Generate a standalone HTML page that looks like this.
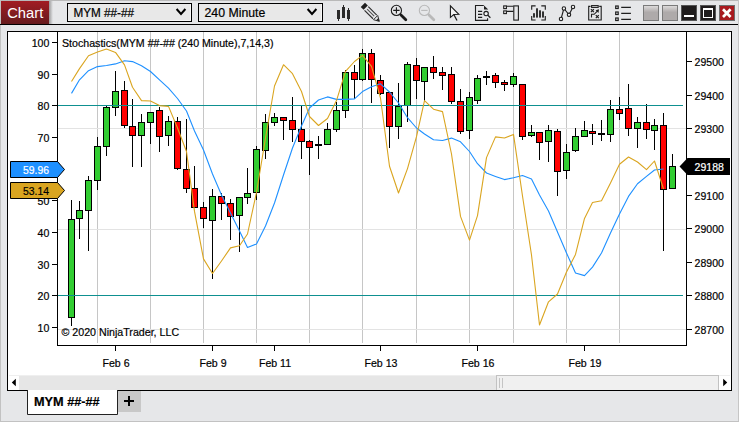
<!DOCTYPE html>
<html><head><meta charset="utf-8"><style>
html,body{margin:0;padding:0;width:739px;height:422px;overflow:hidden;background:#e6e7e9;font-family:"Liberation Sans", sans-serif;}
</style></head><body>
<svg width="739" height="422" viewBox="0 0 739 422" style="position:absolute;left:0;top:0;font-family:'Liberation Sans', sans-serif">
<rect x="0" y="0" width="739" height="422" fill="#e6e7e9"/>
<rect x="0" y="0" width="739" height="1" fill="#b9b9b9"/>
<rect x="0" y="0" width="1" height="422" fill="#c2c2c2"/>
<rect x="738" y="0" width="1" height="422" fill="#c6c6c6"/>
<rect x="0" y="421" width="739" height="1" fill="#c2c2c2"/>
<rect x="1" y="1" width="737" height="23" fill="#e6e7e9"/>
<rect x="0" y="24" width="738" height="1" fill="#000"/>
<defs><linearGradient id="tg" x1="0" y1="0" x2="0" y2="1"><stop offset="0" stop-color="#a21d23"/><stop offset="1" stop-color="#661a1d"/></linearGradient><linearGradient id="sh" x1="0" y1="0" x2="1" y2="0"><stop offset="0" stop-color="#9a9a9a"/><stop offset="1" stop-color="#e6e7e9"/></linearGradient><linearGradient id="gb" x1="0" y1="0" x2="0" y2="1"><stop offset="0" stop-color="#dcdada"/><stop offset="0.45" stop-color="#aeaaaa"/><stop offset="1" stop-color="#aeaaaa"/></linearGradient></defs>
<rect x="49" y="1" width="4" height="23" fill="url(#sh)"/>
<rect x="1" y="1" width="48" height="23" fill="url(#tg)"/>
<text transform="translate(7.2,17.8) scale(0.99,1)" font-size="14.9" text-anchor="start" fill="#fff" stroke="#fff" stroke-width="0" font-weight="normal">Chart</text>
<rect x="67.5" y="3.5" width="124" height="18" fill="#e8e8e8" stroke="#000" stroke-width="1"/>
<path d="M68,20.5 H190.5 V4" fill="none" stroke="#f8f8f8" stroke-width="1"/>
<text transform="translate(73.5,17) scale(0.937,1)" font-size="12.5" text-anchor="start" fill="#000" stroke="#000" stroke-width="0.2" font-weight="normal">MYM ##-##</text>
<polyline points="176.6,9.0 181,13.9 185.4,9.0" fill="none" stroke="#000" stroke-width="2"/>
<rect x="198.5" y="3.5" width="124" height="18" fill="#e8e8e8" stroke="#000" stroke-width="1"/>
<path d="M199,20.5 H321.5 V4" fill="none" stroke="#f8f8f8" stroke-width="1"/>
<text transform="translate(204.5,17) scale(0.985,1)" font-size="12.5" text-anchor="start" fill="#000" stroke="#000" stroke-width="0.2" font-weight="normal">240 Minute</text>
<polyline points="307.6,9.0 312,13.9 316.4,9.0" fill="none" stroke="#000" stroke-width="2"/>
<g fill="#2a2a2a" shape-rendering="crispEdges">
<rect x="337" y="10" width="3" height="9"/><rect x="338" y="19" width="1" height="2"/>
<rect x="342" y="7" width="3" height="11"/><rect x="343" y="5" width="1" height="2"/>
<rect x="347" y="10" width="3" height="9"/><rect x="348" y="8" width="1" height="2"/><rect x="348" y="19" width="1" height="2"/>
</g>
<g transform="translate(371,13) rotate(45)"><rect x="-11.5" y="-3" width="4" height="6" fill="#1e1e1e"/><rect x="-6.5" y="-3.2" width="12" height="1.1" fill="#2a2a2a"/><rect x="-6.5" y="2.1" width="12" height="1.1" fill="#2a2a2a"/><rect x="-5.5" y="-0.55" width="10" height="1.1" fill="#555"/><path d="M6.5,-3 L11.8,0 L6.5,3 Z" fill="#e6e7e9" stroke="#2a2a2a" stroke-width="0.9"/><path d="M8.8,-1.6 L11.8,0 L8.8,1.6 Z" fill="#1e1e1e"/></g>
<g stroke="#1a1a1a" fill="none"><circle cx="396.4" cy="10.4" r="5.1" stroke-width="1.1"/><path d="M393.2,10.4 H399.6 M396.4,7.2 V13.6" stroke-width="1.1"/><path d="M401,15 L405.8,19.8" stroke-width="2.8" stroke-linecap="round"/></g>
<g stroke="#b9b9b9" fill="none"><circle cx="424.4" cy="10.4" r="5.1" stroke-width="1.1"/><path d="M421.2,10.4 H427.6" stroke-width="1.1"/><path d="M429,15 L433.8,19.8" stroke-width="2.8" stroke-linecap="round"/></g>
<g stroke="#1a1a1a" fill="none" stroke-width="1.1"><path d="M450.4,5.9 V17.4 L453.8,14.5 L458.8,14.3 Z" fill="#f2f2f2"/><path d="M453.8,14.5 L457,20.5" stroke-width="1.3"/></g>
<g stroke="#1e1e1e" fill="none" stroke-width="1.1"><path d="M487.6,18.2 V20.4 H475.5 V5.5 H483.8"/><path d="M478,11.4 H482.2 M478,14.4 H482.2 M478,17.4 H482.2" stroke-width="1.2"/><circle cx="486.1" cy="13.6" r="2.2" fill="#f4f4f4"/><path d="M487.8,15.3 L490.4,17.8" stroke-width="1.2"/></g>
<path d="M484,5.6 L488.2,9.6 L484,9.6 Z" fill="#1e1e1e"/>
<g stroke="#1e1e1e" fill="none" stroke-width="1.1"><rect x="503.7" y="5.9" width="2.7" height="2.7" fill="#f4f4f4"/><rect x="503.7" y="10.9" width="2.7" height="2.7" fill="#f4f4f4"/><path d="M506.6,6.3 H513.5 M506.6,11.4 H513.5"/><rect x="513.8" y="5.9" width="4.6" height="14.2"/></g>
<g stroke="#1e1e1e" fill="none" stroke-width="1.1"><path d="M531.7,9.8 V5.9 H535.6 M541.3,5.9 H545.3 V9.8 M545.3,16 V20 H541.3 M535.6,20 H531.7 V16"/></g>
<g fill="#1e1e1e"><rect x="533.1" y="13.2" width="1.8" height="4.4"/><rect x="536.1" y="8.3" width="1.8" height="9.3"/><rect x="539.1" y="10.3" width="1.8" height="7.3"/><rect x="542.1" y="11.4" width="1.8" height="6.2"/></g>
<g stroke="#1e1e1e" stroke-width="1.1"><polyline points="561,19 563.9,8.5 569,14.8 573,7" fill="none"/><circle cx="561" cy="19" r="1.7" fill="#f2f2f2"/><circle cx="563.9" cy="8.5" r="1.7" fill="#f2f2f2"/><circle cx="569" cy="14.8" r="1.7" fill="#f2f2f2"/><circle cx="573" cy="7" r="1.7" fill="#f2f2f2"/></g>
<g stroke="#1e1e1e" fill="none" stroke-width="1.1"><path d="M590.5,6.4 H588.7 V20 H601.2 V6.4 H599.2"/><rect x="591.6" y="5.6" width="6.6" height="1.8" fill="#f2f2f2"/><path d="M591.5,17.6 V14.3 H594.2 L597.6,10.9"/><path d="M590.9,9.1 L593.9,12.1 M593.9,9.1 L590.9,12.1 M595.8,15.1 L598.8,18.1 M598.8,15.1 L595.8,18.1" stroke-width="1.2"/></g>
<path d="M595.6,10.3 L599,9.2 L598.5,12.9 Z" fill="#1e1e1e"/>
<g stroke="#1e1e1e" fill="none" stroke-width="1.2"><rect x="615.7" y="6" width="2.5" height="2.5"/><rect x="615.7" y="12" width="2.5" height="2.5"/><rect x="615.7" y="18" width="2.5" height="2.5"/><path d="M621.2,7.4 H630.9 M621.2,13.4 H630.9 M621.2,19.4 H630.9"/></g>
<rect x="643" y="5" width="16" height="16" fill="#7a7a7a"/><rect x="644" y="6" width="14" height="14" fill="url(#gb)"/>
<rect x="662" y="5" width="16" height="16" fill="#7a7a7a"/><rect x="663" y="6" width="14" height="14" fill="url(#gb)"/>
<rect x="681" y="5" width="16" height="16" fill="#555"/><rect x="682" y="6" width="14" height="14" fill="#1f1c1c"/>
<rect x="684" y="15" width="10" height="2" fill="#fff"/>
<rect x="700" y="5" width="16" height="16" fill="#555"/><rect x="701" y="6" width="14" height="14" fill="#1f1c1c"/>
<rect x="703.5" y="8.5" width="9" height="9" fill="none" stroke="#fff" stroke-width="1"/><rect x="703" y="8" width="10" height="2" fill="#fff"/>
<rect x="719" y="5" width="16" height="16" fill="#6e6e6e"/><rect x="720" y="6" width="14" height="14" fill="#a8191e"/>
<path d="M723,9.3 L730.6,17 M730.6,9.3 L723,17" stroke="#fff" stroke-width="2.7"/>
<rect x="7.5" y="31.5" width="724" height="359" fill="#fff" stroke="#000" stroke-width="1"/>
<rect x="97" y="32" width="1" height="311" fill="#c6c6c6"/>
<rect x="150" y="32" width="1" height="311" fill="#c6c6c6"/>
<rect x="203" y="32" width="1" height="311" fill="#c6c6c6"/>
<rect x="256" y="32" width="1" height="311" fill="#c6c6c6"/>
<rect x="309" y="32" width="1" height="311" fill="#c6c6c6"/>
<rect x="362" y="32" width="1" height="311" fill="#c6c6c6"/>
<rect x="416" y="32" width="1" height="311" fill="#c6c6c6"/>
<rect x="469" y="32" width="1" height="311" fill="#c6c6c6"/>
<rect x="513" y="32" width="1" height="311" fill="#c6c6c6"/>
<rect x="566" y="32" width="1" height="311" fill="#c6c6c6"/>
<rect x="619" y="32" width="1" height="311" fill="#c6c6c6"/>
<rect x="58" y="128" width="628" height="1" fill="#e3e3e3"/>
<rect x="58" y="229" width="628" height="1" fill="#e3e3e3"/>
<rect x="58" y="329" width="628" height="1" fill="#e3e3e3"/>
<text transform="translate(62,47) scale(0.951,1)" font-size="11.2" text-anchor="start" fill="#000" stroke="#000" stroke-width="0.2" font-weight="normal">Stochastics(MYM ##-## (240 Minute),7,14,3)</text>
<text transform="translate(61.5,336) scale(0.952,1)" font-size="11.2" text-anchor="start" fill="#000" stroke="#000" stroke-width="0.2" font-weight="normal">© 2020 NinjaTrader, LLC</text>
<g shape-rendering="crispEdges">
<rect x="71" y="200" width="1" height="126" fill="#000"/>
<rect x="68" y="219" width="7" height="99" fill="#000"/>
<rect x="69" y="220" width="5" height="97" fill="#32cd32"/>
<rect x="79" y="201" width="1" height="38" fill="#000"/>
<rect x="76" y="210" width="7" height="9" fill="#000"/>
<rect x="77" y="211" width="5" height="7" fill="#32cd32"/>
<rect x="88" y="176" width="1" height="75" fill="#000"/>
<rect x="85" y="180" width="7" height="31" fill="#000"/>
<rect x="86" y="181" width="5" height="29" fill="#32cd32"/>
<rect x="97" y="137" width="1" height="53" fill="#000"/>
<rect x="94" y="146" width="7" height="35" fill="#000"/>
<rect x="95" y="147" width="5" height="33" fill="#32cd32"/>
<rect x="106" y="106" width="1" height="50" fill="#000"/>
<rect x="103" y="107" width="7" height="40" fill="#000"/>
<rect x="104" y="108" width="5" height="38" fill="#32cd32"/>
<rect x="115" y="71" width="1" height="45" fill="#000"/>
<rect x="112" y="91" width="7" height="17" fill="#000"/>
<rect x="113" y="92" width="5" height="15" fill="#32cd32"/>
<rect x="124" y="81" width="1" height="47" fill="#000"/>
<rect x="121" y="90" width="7" height="36" fill="#000"/>
<rect x="122" y="91" width="5" height="34" fill="#ff0000"/>
<rect x="132" y="99" width="1" height="68" fill="#000"/>
<rect x="129" y="126" width="7" height="10" fill="#000"/>
<rect x="130" y="127" width="5" height="8" fill="#ff0000"/>
<rect x="141" y="114" width="1" height="53" fill="#000"/>
<rect x="138" y="122" width="7" height="14" fill="#000"/>
<rect x="139" y="123" width="5" height="12" fill="#32cd32"/>
<rect x="150" y="112" width="1" height="32" fill="#000"/>
<rect x="147" y="112" width="7" height="11" fill="#000"/>
<rect x="148" y="113" width="5" height="9" fill="#32cd32"/>
<rect x="159" y="107" width="1" height="45" fill="#000"/>
<rect x="156" y="110" width="7" height="27" fill="#000"/>
<rect x="157" y="111" width="5" height="25" fill="#ff0000"/>
<rect x="168" y="116" width="1" height="30" fill="#000"/>
<rect x="165" y="121" width="7" height="15" fill="#000"/>
<rect x="166" y="122" width="5" height="13" fill="#32cd32"/>
<rect x="177" y="117" width="1" height="53" fill="#000"/>
<rect x="174" y="121" width="7" height="48" fill="#000"/>
<rect x="175" y="122" width="5" height="46" fill="#ff0000"/>
<rect x="186" y="119" width="1" height="74" fill="#000"/>
<rect x="183" y="169" width="7" height="20" fill="#000"/>
<rect x="184" y="170" width="5" height="18" fill="#ff0000"/>
<rect x="194" y="166" width="1" height="42" fill="#000"/>
<rect x="191" y="188" width="7" height="20" fill="#000"/>
<rect x="192" y="189" width="5" height="18" fill="#ff0000"/>
<rect x="203" y="202" width="1" height="26" fill="#000"/>
<rect x="200" y="207" width="7" height="12" fill="#000"/>
<rect x="201" y="208" width="5" height="10" fill="#ff0000"/>
<rect x="212" y="189" width="1" height="90" fill="#000"/>
<rect x="209" y="196" width="7" height="25" fill="#000"/>
<rect x="210" y="197" width="5" height="23" fill="#32cd32"/>
<rect x="221" y="193" width="1" height="27" fill="#000"/>
<rect x="218" y="196" width="7" height="8" fill="#000"/>
<rect x="219" y="197" width="5" height="6" fill="#ff0000"/>
<rect x="230" y="199" width="1" height="41" fill="#000"/>
<rect x="227" y="203" width="7" height="14" fill="#000"/>
<rect x="228" y="204" width="5" height="12" fill="#ff0000"/>
<rect x="239" y="197" width="1" height="55" fill="#000"/>
<rect x="236" y="197" width="7" height="19" fill="#000"/>
<rect x="237" y="198" width="5" height="17" fill="#32cd32"/>
<rect x="247" y="168" width="1" height="36" fill="#000"/>
<rect x="244" y="193" width="7" height="5" fill="#000"/>
<rect x="245" y="194" width="5" height="3" fill="#32cd32"/>
<rect x="256" y="146" width="1" height="54" fill="#000"/>
<rect x="253" y="149" width="7" height="44" fill="#000"/>
<rect x="254" y="150" width="5" height="42" fill="#32cd32"/>
<rect x="265" y="114" width="1" height="45" fill="#000"/>
<rect x="262" y="122" width="7" height="29" fill="#000"/>
<rect x="263" y="123" width="5" height="27" fill="#32cd32"/>
<rect x="274" y="113" width="1" height="13" fill="#000"/>
<rect x="271" y="117" width="7" height="6" fill="#000"/>
<rect x="272" y="118" width="5" height="4" fill="#32cd32"/>
<rect x="283" y="117" width="1" height="23" fill="#000"/>
<rect x="280" y="117" width="7" height="4" fill="#000"/>
<rect x="281" y="118" width="5" height="2" fill="#ff0000"/>
<rect x="292" y="97" width="1" height="45" fill="#000"/>
<rect x="289" y="120" width="7" height="10" fill="#000"/>
<rect x="290" y="121" width="5" height="8" fill="#ff0000"/>
<rect x="301" y="106" width="1" height="53" fill="#000"/>
<rect x="298" y="129" width="7" height="13" fill="#000"/>
<rect x="299" y="130" width="5" height="11" fill="#ff0000"/>
<rect x="309" y="140" width="1" height="35" fill="#000"/>
<rect x="306" y="141" width="7" height="7" fill="#000"/>
<rect x="307" y="142" width="5" height="5" fill="#ff0000"/>
<rect x="318" y="136" width="1" height="23" fill="#000"/>
<rect x="315" y="144" width="7" height="2" fill="#000"/>
<rect x="327" y="123" width="1" height="22" fill="#000"/>
<rect x="324" y="129" width="7" height="16" fill="#000"/>
<rect x="325" y="130" width="5" height="14" fill="#32cd32"/>
<rect x="336" y="102" width="1" height="30" fill="#000"/>
<rect x="333" y="110" width="7" height="20" fill="#000"/>
<rect x="334" y="111" width="5" height="18" fill="#32cd32"/>
<rect x="345" y="70" width="1" height="48" fill="#000"/>
<rect x="342" y="72" width="7" height="39" fill="#000"/>
<rect x="343" y="73" width="5" height="37" fill="#32cd32"/>
<rect x="354" y="65" width="1" height="34" fill="#000"/>
<rect x="351" y="72" width="7" height="8" fill="#000"/>
<rect x="352" y="73" width="5" height="6" fill="#ff0000"/>
<rect x="362" y="49" width="1" height="32" fill="#000"/>
<rect x="359" y="53" width="7" height="27" fill="#000"/>
<rect x="360" y="54" width="5" height="25" fill="#32cd32"/>
<rect x="371" y="49" width="1" height="54" fill="#000"/>
<rect x="368" y="53" width="7" height="27" fill="#000"/>
<rect x="369" y="54" width="5" height="25" fill="#ff0000"/>
<rect x="380" y="75" width="1" height="20" fill="#000"/>
<rect x="377" y="80" width="7" height="14" fill="#000"/>
<rect x="378" y="81" width="5" height="12" fill="#ff0000"/>
<rect x="389" y="93" width="1" height="55" fill="#000"/>
<rect x="386" y="92" width="7" height="35" fill="#000"/>
<rect x="387" y="93" width="5" height="33" fill="#ff0000"/>
<rect x="398" y="83" width="1" height="56" fill="#000"/>
<rect x="395" y="106" width="7" height="21" fill="#000"/>
<rect x="396" y="107" width="5" height="19" fill="#32cd32"/>
<rect x="407" y="62" width="1" height="60" fill="#000"/>
<rect x="404" y="64" width="7" height="42" fill="#000"/>
<rect x="405" y="65" width="5" height="40" fill="#32cd32"/>
<rect x="416" y="58" width="1" height="41" fill="#000"/>
<rect x="413" y="65" width="7" height="16" fill="#000"/>
<rect x="414" y="66" width="5" height="14" fill="#ff0000"/>
<rect x="424" y="68" width="1" height="33" fill="#000"/>
<rect x="421" y="67" width="7" height="15" fill="#000"/>
<rect x="422" y="68" width="5" height="13" fill="#32cd32"/>
<rect x="433" y="56" width="1" height="23" fill="#000"/>
<rect x="430" y="67" width="7" height="6" fill="#000"/>
<rect x="431" y="68" width="5" height="4" fill="#ff0000"/>
<rect x="442" y="67" width="1" height="23" fill="#000"/>
<rect x="439" y="72" width="7" height="4" fill="#000"/>
<rect x="440" y="73" width="5" height="2" fill="#ff0000"/>
<rect x="451" y="67" width="1" height="37" fill="#000"/>
<rect x="448" y="74" width="7" height="28" fill="#000"/>
<rect x="449" y="75" width="5" height="26" fill="#ff0000"/>
<rect x="460" y="89" width="1" height="45" fill="#000"/>
<rect x="457" y="101" width="7" height="31" fill="#000"/>
<rect x="458" y="102" width="5" height="29" fill="#ff0000"/>
<rect x="469" y="92" width="1" height="47" fill="#000"/>
<rect x="466" y="97" width="7" height="34" fill="#000"/>
<rect x="467" y="98" width="5" height="32" fill="#32cd32"/>
<rect x="477" y="75" width="1" height="29" fill="#000"/>
<rect x="474" y="78" width="7" height="23" fill="#000"/>
<rect x="475" y="79" width="5" height="21" fill="#32cd32"/>
<rect x="486" y="71" width="1" height="14" fill="#000"/>
<rect x="483" y="76" width="7" height="2" fill="#000"/>
<rect x="495" y="73" width="1" height="15" fill="#000"/>
<rect x="492" y="75" width="7" height="8" fill="#000"/>
<rect x="493" y="76" width="5" height="6" fill="#ff0000"/>
<rect x="504" y="80" width="1" height="11" fill="#000"/>
<rect x="501" y="82" width="7" height="3" fill="#000"/>
<rect x="502" y="83" width="5" height="1" fill="#ff0000"/>
<rect x="513" y="73" width="1" height="14" fill="#000"/>
<rect x="510" y="76" width="7" height="9" fill="#000"/>
<rect x="511" y="77" width="5" height="7" fill="#32cd32"/>
<rect x="522" y="84" width="1" height="56" fill="#000"/>
<rect x="519" y="84" width="7" height="53" fill="#000"/>
<rect x="520" y="85" width="5" height="51" fill="#ff0000"/>
<rect x="531" y="125" width="1" height="12" fill="#000"/>
<rect x="528" y="132" width="7" height="4" fill="#000"/>
<rect x="529" y="133" width="5" height="2" fill="#32cd32"/>
<rect x="539" y="132" width="1" height="28" fill="#000"/>
<rect x="536" y="132" width="7" height="11" fill="#000"/>
<rect x="537" y="133" width="5" height="9" fill="#ff0000"/>
<rect x="548" y="125" width="1" height="37" fill="#000"/>
<rect x="545" y="130" width="7" height="12" fill="#000"/>
<rect x="546" y="131" width="5" height="10" fill="#32cd32"/>
<rect x="557" y="129" width="1" height="67" fill="#000"/>
<rect x="554" y="131" width="7" height="41" fill="#000"/>
<rect x="555" y="132" width="5" height="39" fill="#ff0000"/>
<rect x="566" y="144" width="1" height="35" fill="#000"/>
<rect x="563" y="152" width="7" height="19" fill="#000"/>
<rect x="564" y="153" width="5" height="17" fill="#32cd32"/>
<rect x="575" y="128" width="1" height="24" fill="#000"/>
<rect x="572" y="136" width="7" height="15" fill="#000"/>
<rect x="573" y="137" width="5" height="13" fill="#32cd32"/>
<rect x="584" y="121" width="1" height="15" fill="#000"/>
<rect x="581" y="130" width="7" height="7" fill="#000"/>
<rect x="582" y="131" width="5" height="5" fill="#32cd32"/>
<rect x="592" y="124" width="1" height="21" fill="#000"/>
<rect x="589" y="131" width="7" height="3" fill="#000"/>
<rect x="590" y="132" width="5" height="1" fill="#ff0000"/>
<rect x="601" y="120" width="1" height="21" fill="#000"/>
<rect x="598" y="133" width="7" height="2" fill="#000"/>
<rect x="610" y="100" width="1" height="42" fill="#000"/>
<rect x="607" y="109" width="7" height="26" fill="#000"/>
<rect x="608" y="110" width="5" height="24" fill="#32cd32"/>
<rect x="619" y="97" width="1" height="23" fill="#000"/>
<rect x="616" y="109" width="7" height="5" fill="#000"/>
<rect x="617" y="110" width="5" height="3" fill="#ff0000"/>
<rect x="628" y="84" width="1" height="52" fill="#000"/>
<rect x="625" y="108" width="7" height="21" fill="#000"/>
<rect x="626" y="109" width="5" height="19" fill="#ff0000"/>
<rect x="637" y="117" width="1" height="31" fill="#000"/>
<rect x="634" y="122" width="7" height="7" fill="#000"/>
<rect x="635" y="123" width="5" height="5" fill="#32cd32"/>
<rect x="646" y="104" width="1" height="35" fill="#000"/>
<rect x="643" y="122" width="7" height="8" fill="#000"/>
<rect x="644" y="123" width="5" height="6" fill="#ff0000"/>
<rect x="654" y="119" width="1" height="31" fill="#000"/>
<rect x="651" y="125" width="7" height="6" fill="#000"/>
<rect x="652" y="126" width="5" height="4" fill="#32cd32"/>
<rect x="663" y="113" width="1" height="138" fill="#000"/>
<rect x="660" y="125" width="7" height="65" fill="#000"/>
<rect x="661" y="126" width="5" height="63" fill="#ff0000"/>
<rect x="672" y="154" width="1" height="34" fill="#000"/>
<rect x="669" y="166" width="7" height="23" fill="#000"/>
<rect x="670" y="167" width="5" height="21" fill="#32cd32"/>
</g>
<rect x="58" y="105" width="625" height="1" fill="#0e9090"/>
<rect x="58" y="295" width="625" height="1" fill="#0e9090"/>
<g shape-rendering="auto">
<polyline points="71.50,93.40 79.50,79.80 88.50,70.70 97.50,66.60 106.50,65.50 115.50,63.90 124.50,60.70 132.50,61.60 141.50,65.70 150.50,71.50 159.50,79.80 168.50,88.10 177.50,98.50 186.50,111.00 194.50,131.00 203.50,150.00 212.50,174.00 221.50,195.00 230.50,213.00 239.50,231.00 247.50,247.50 256.50,244.00 265.50,226.00 274.50,203.00 283.50,175.00 292.50,148.00 301.50,126.00 309.50,108.00 318.50,100.00 327.50,96.90 336.50,99.40 345.50,99.40 354.50,98.90 362.50,91.60 371.50,86.70 380.50,83.80 389.50,92.00 398.50,103.00 407.50,117.70 416.50,128.00 424.50,134.00 433.50,139.80 442.50,140.50 451.50,138.10 460.50,141.80 469.50,151.50 477.50,163.70 486.50,173.00 495.50,176.40 504.50,179.60 513.50,177.70 522.50,175.50 531.50,178.90 539.50,195.00 548.50,211.00 557.50,232.00 566.50,253.00 575.50,273.00 584.50,275.60 592.50,267.10 601.50,253.00 610.50,233.00 619.50,214.00 628.50,196.40 637.50,183.70 646.50,176.40 654.50,170.00 663.50,169.00" fill="none" stroke="#1e90ff" stroke-width="1.1" stroke-linejoin="round"/>
<polyline points="71.50,81.50 79.50,68.60 88.50,55.80 97.50,52.00 106.50,49.10 115.50,52.40 124.50,64.90 132.50,87.30 141.50,100.60 150.50,101.00 159.50,105.60 168.50,106.40 177.50,128.00 186.50,151.50 194.50,211.40 203.50,258.90 212.50,273.50 221.50,261.00 230.50,247.90 239.50,245.70 247.50,234.00 256.50,192.40 265.50,138.00 274.50,86.00 283.50,64.70 292.50,73.70 301.50,91.50 309.50,116.50 318.50,125.50 327.50,118.50 336.50,100.60 345.50,71.30 354.50,61.50 362.50,55.40 371.50,66.40 380.50,98.00 389.50,166.20 398.50,193.00 407.50,168.60 416.50,136.70 424.50,100.60 433.50,109.20 442.50,111.60 451.50,154.00 460.50,216.40 469.50,240.10 477.50,215.60 486.50,157.60 495.50,136.90 504.50,138.00 513.50,134.40 522.50,196.00 531.50,255.00 539.50,325.00 548.50,301.80 557.50,294.00 566.50,272.00 575.50,254.40 584.50,218.40 592.50,202.50 601.50,200.80 610.50,183.00 619.50,164.30 628.50,157.00 637.50,162.00 646.50,169.70 654.50,161.00 663.50,189.00" fill="none" stroke="#daa520" stroke-width="1.1" stroke-linejoin="round"/>
</g>
<rect x="57" y="31" width="1" height="315" fill="#000"/>
<rect x="686" y="31" width="1" height="315" fill="#000"/>
<rect x="57" y="345" width="630" height="1" fill="#000"/>
<rect x="52" y="327" width="5" height="1" fill="#000"/>
<text transform="translate(49.3,331.7) scale(0.944,1)" font-size="11.2" text-anchor="end" fill="#000" stroke="#000" stroke-width="0.2" font-weight="normal">10</text>
<rect x="52" y="295" width="5" height="1" fill="#000"/>
<text transform="translate(49.3,299.7) scale(0.944,1)" font-size="11.2" text-anchor="end" fill="#000" stroke="#000" stroke-width="0.2" font-weight="normal">20</text>
<rect x="52" y="264" width="5" height="1" fill="#000"/>
<text transform="translate(49.3,268.7) scale(0.944,1)" font-size="11.2" text-anchor="end" fill="#000" stroke="#000" stroke-width="0.2" font-weight="normal">30</text>
<rect x="52" y="232" width="5" height="1" fill="#000"/>
<text transform="translate(49.3,236.7) scale(0.944,1)" font-size="11.2" text-anchor="end" fill="#000" stroke="#000" stroke-width="0.2" font-weight="normal">40</text>
<rect x="52" y="200" width="5" height="1" fill="#000"/>
<text transform="translate(49.3,204.7) scale(0.944,1)" font-size="11.2" text-anchor="end" fill="#000" stroke="#000" stroke-width="0.2" font-weight="normal">50</text>
<rect x="52" y="169" width="5" height="1" fill="#000"/>
<text transform="translate(49.3,173.7) scale(0.944,1)" font-size="11.2" text-anchor="end" fill="#000" stroke="#000" stroke-width="0.2" font-weight="normal">60</text>
<rect x="52" y="137" width="5" height="1" fill="#000"/>
<text transform="translate(49.3,141.7) scale(0.944,1)" font-size="11.2" text-anchor="end" fill="#000" stroke="#000" stroke-width="0.2" font-weight="normal">70</text>
<rect x="52" y="105" width="5" height="1" fill="#000"/>
<text transform="translate(49.3,109.7) scale(0.944,1)" font-size="11.2" text-anchor="end" fill="#000" stroke="#000" stroke-width="0.2" font-weight="normal">80</text>
<rect x="52" y="74" width="5" height="1" fill="#000"/>
<text transform="translate(49.3,78.7) scale(0.944,1)" font-size="11.2" text-anchor="end" fill="#000" stroke="#000" stroke-width="0.2" font-weight="normal">90</text>
<rect x="52" y="42" width="5" height="1" fill="#000"/>
<text transform="translate(49.3,46.7) scale(0.944,1)" font-size="11.2" text-anchor="end" fill="#000" stroke="#000" stroke-width="0.2" font-weight="normal">100</text>
<rect x="687" y="329" width="5" height="1" fill="#000"/>
<text transform="translate(694.6,333.7) scale(0.94,1)" font-size="11.2" text-anchor="start" fill="#000" stroke="#000" stroke-width="0.2" font-weight="normal">28700</text>
<rect x="687" y="295" width="5" height="1" fill="#000"/>
<text transform="translate(694.6,299.7) scale(0.94,1)" font-size="11.2" text-anchor="start" fill="#000" stroke="#000" stroke-width="0.2" font-weight="normal">28800</text>
<rect x="687" y="262" width="5" height="1" fill="#000"/>
<text transform="translate(694.6,266.7) scale(0.94,1)" font-size="11.2" text-anchor="start" fill="#000" stroke="#000" stroke-width="0.2" font-weight="normal">28900</text>
<rect x="687" y="228" width="5" height="1" fill="#000"/>
<text transform="translate(694.6,232.7) scale(0.94,1)" font-size="11.2" text-anchor="start" fill="#000" stroke="#000" stroke-width="0.2" font-weight="normal">29000</text>
<rect x="687" y="195" width="5" height="1" fill="#000"/>
<text transform="translate(694.6,199.7) scale(0.94,1)" font-size="11.2" text-anchor="start" fill="#000" stroke="#000" stroke-width="0.2" font-weight="normal">29100</text>
<rect x="687" y="162" width="5" height="1" fill="#000"/>
<rect x="687" y="128" width="5" height="1" fill="#000"/>
<text transform="translate(694.6,132.7) scale(0.94,1)" font-size="11.2" text-anchor="start" fill="#000" stroke="#000" stroke-width="0.2" font-weight="normal">29300</text>
<rect x="687" y="95" width="5" height="1" fill="#000"/>
<text transform="translate(694.6,99.7) scale(0.94,1)" font-size="11.2" text-anchor="start" fill="#000" stroke="#000" stroke-width="0.2" font-weight="normal">29400</text>
<rect x="687" y="61" width="5" height="1" fill="#000"/>
<text transform="translate(694.6,65.7) scale(0.94,1)" font-size="11.2" text-anchor="start" fill="#000" stroke="#000" stroke-width="0.2" font-weight="normal">29500</text>
<rect x="115" y="346" width="1" height="5" fill="#000"/>
<text transform="translate(116,367) scale(0.947,1)" font-size="11.2" text-anchor="middle" fill="#000" stroke="#000" stroke-width="0.2" font-weight="normal">Feb 6</text>
<rect x="212" y="346" width="1" height="5" fill="#000"/>
<text transform="translate(213,367) scale(0.947,1)" font-size="11.2" text-anchor="middle" fill="#000" stroke="#000" stroke-width="0.2" font-weight="normal">Feb 9</text>
<rect x="274" y="346" width="1" height="5" fill="#000"/>
<text transform="translate(275,367) scale(0.947,1)" font-size="11.2" text-anchor="middle" fill="#000" stroke="#000" stroke-width="0.2" font-weight="normal">Feb 11</text>
<rect x="380" y="346" width="1" height="5" fill="#000"/>
<text transform="translate(381,367) scale(0.947,1)" font-size="11.2" text-anchor="middle" fill="#000" stroke="#000" stroke-width="0.2" font-weight="normal">Feb 13</text>
<rect x="477" y="346" width="1" height="5" fill="#000"/>
<text transform="translate(478,367) scale(0.947,1)" font-size="11.2" text-anchor="middle" fill="#000" stroke="#000" stroke-width="0.2" font-weight="normal">Feb 16</text>
<rect x="584" y="346" width="1" height="5" fill="#000"/>
<text transform="translate(585,367) scale(0.947,1)" font-size="11.2" text-anchor="middle" fill="#000" stroke="#000" stroke-width="0.2" font-weight="normal">Feb 19</text>
<path d="M10.5,161.5 H57.5 L64.5,169.5 L57.5,177.5 H10.5 Z" fill="#1e90ff" stroke="#000" stroke-width="1"/>
<text transform="translate(36,173.5) scale(0.93,1)" font-size="11.2" text-anchor="middle" fill="#fff" stroke="#fff" stroke-width="0.2" font-weight="normal">59.96</text>
<path d="M10.5,182.5 H57.5 L64.5,190.5 L57.5,198.5 H10.5 Z" fill="#daa520" stroke="#000" stroke-width="1"/>
<text transform="translate(36,194.5) scale(0.93,1)" font-size="11.2" text-anchor="middle" fill="#000" stroke="#000" stroke-width="0.2" font-weight="normal">53.14</text>
<path d="M679.5,166.5 L687.5,158 H730 V175 H687.5 Z" fill="#000"/>
<text transform="translate(694.6,171) scale(0.94,1)" font-size="11.2" text-anchor="start" fill="#fff" stroke="#fff" stroke-width="0.2" font-weight="normal">29188</text>
<rect x="9" y="375" width="721" height="1" fill="#efefef"/>
<rect x="19" y="376" width="700" height="14" fill="#e6e6e6"/>
<rect x="496" y="375" width="223" height="15" fill="#c2c2c2"/><rect x="497" y="376" width="221" height="14" fill="#f0f0f0"/>
<rect x="499" y="378" width="1" height="10" fill="#c4c4c4"/><rect x="502" y="378" width="1" height="10" fill="#c4c4c4"/>
<path d="M11.8,382.5 L15.8,378.8 V386.2 Z" fill="#000"/>
<path d="M727.2,382.5 L723.2,378.8 V386.2 Z" fill="#000"/>
<path d="M27.5,390 V414.5 H117.5 V390" fill="#fff" stroke="#222" stroke-width="1"/>
<rect x="28" y="390" width="89" height="1" fill="#fff"/>
<text transform="translate(34,406) scale(1.017,1)" font-size="12.5" text-anchor="start" fill="#000" stroke="#000" stroke-width="0.2" font-weight="bold">MYM ##-##</text>
<rect x="118" y="391" width="23" height="21" fill="#c8c8c8"/>
<path d="M124,401 H134 M129,396 V406" stroke="#000" stroke-width="2" fill="none"/>
</svg>
</body></html>
